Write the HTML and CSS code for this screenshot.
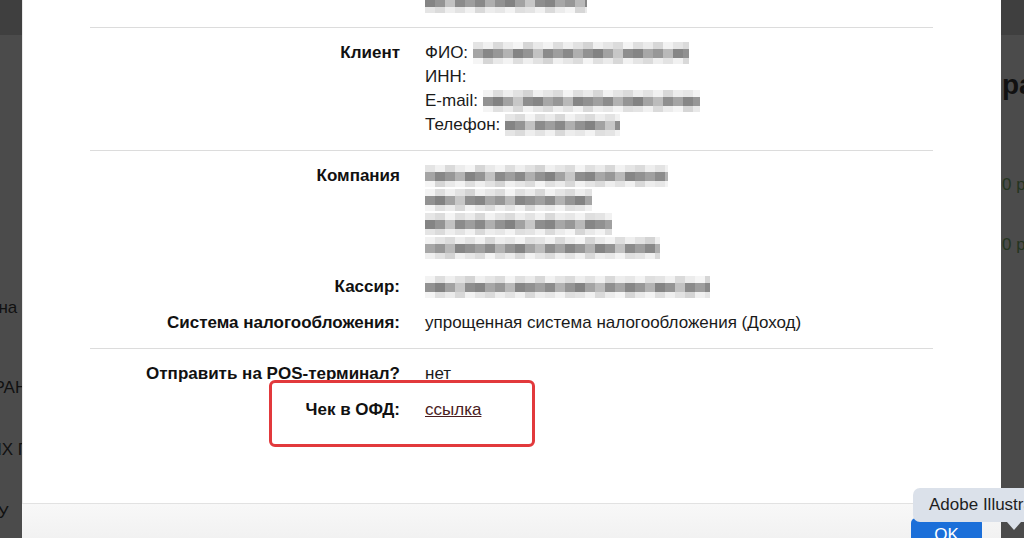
FILE: index.html
```html
<!DOCTYPE html>
<html lang="ru">

<head>
    <meta charset="UTF-8">
    <meta name="viewport" content="width=device-width, initial-scale=1.0">
    <title>Чек</title>
    <link rel="stylesheet" href="styles.css">
</head>

<body>

    <div class="backdrop">

        <!-- page under the overlay, left side -->
        <aside class="page-side page-left">
            <div class="page-bar"></div>
            <div class="page-item item-1">Смена</div>
            <div class="page-item item-2">ГАРАНТИИ</div>
            <div class="page-item item-3">ДРУГИХ ПРОДАЖ</div>
            <div class="page-item item-4">ЗАКАЗУ</div>
        </aside>

        <div class="modal">
            <div class="modal-body">

                <section class="group group-first">
                    <div class="row">
                        <div class="label"></div>
                        <div class="value"><span class="mosaic m-c" style="width:162px"></span></div>
                    </div>
                </section>

                <section class="group">
                    <div class="row">
                        <div class="label">Клиент</div>
                        <div class="value">
                            <div>ФИО: <span class="mosaic m-a" style="width:216px"></span></div>
                            <div>ИНН:</div>
                            <div>E-mail: <span class="mosaic m-b" style="width:217px"></span></div>
                            <div>Телефон: <span class="mosaic m-c" style="width:115px"></span></div>
                        </div>
                    </div>
                </section>

                <section class="group">
                    <div class="row row-company">
                        <div class="label">Компания</div>
                        <div class="value">
                            <div><span class="mosaic m-a" style="width:243px"></span></div>
                            <div><span class="mosaic m-b" style="width:167px"></span></div>
                            <div><span class="mosaic m-c" style="width:187px"></span></div>
                            <div><span class="mosaic m-d" style="width:235px"></span></div>
                        </div>
                    </div>
                    <div class="row">
                        <div class="label">Кассир:</div>
                        <div class="value"><span class="mosaic m-b" style="width:285px"></span></div>
                    </div>
                    <div class="row">
                        <div class="label">Система налогообложения:</div>
                        <div class="value">упрощенная система налогообложения (Доход)</div>
                    </div>
                </section>

                <section class="group">
                    <div class="row">
                        <div class="label">Отправить на POS-терминал?</div>
                        <div class="value">нет</div>
                    </div>
                    <div class="row row-marked">
                        <div class="label">Чек в ОФД:</div>
                        <div class="value"><a href="#" class="ofd-link">ссылка</a></div>
                        <div class="marker"></div>
                    </div>
                </section>

            </div>
            <div class="modal-footer">
                <button class="btn-ok">OK</button>
            </div>
        </div>

        <!-- page under the overlay, right side -->
        <aside class="page-side page-right">
            <div class="page-bar"></div>
            <div class="page-title">раздел</div>
            <div class="page-sum sum-1">0 руб.</div>
            <div class="page-sum sum-2">0 руб.</div>
        </aside>

    </div>

    <div class="dock-tip">Adobe Illustrator 2023</div>

</body>

</html>
```

FILE: styles.css
```css
html,
body {
    margin: 0;
    padding: 0;
    height: 100%;
    overflow: hidden;
}

body {
    font-family: 'Liberation Sans', Arial, sans-serif;
    font-size: 17px;
    background-color: #4b4b4b;
    color: #1a1a1a;
}

.backdrop {
    display: flex;
    height: 538px;
}

/* dimmed page behind the modal */
.page-side {
    background-color: #4b4b4b;
    overflow: hidden;
    white-space: nowrap;
    color: #111;
}

.page-left {
    width: 22px;
    flex: none;
}

.page-right {
    width: 23px;
    flex: none;
}

.page-bar {
    height: 35px;
    background-color: #3f3f3f;
}

.page-item {
    line-height: 20px;
}

.item-1 {
    margin: 263px 0 0 -35px;
}

.item-2 {
    margin: 60px 0 0 -26px;
}

.item-3 {
    margin: 42px 0 0 -53px;
}

.item-4 {
    margin: 43px 0 0 -55px;
}

.page-title {
    font-size: 28px;
    font-weight: bold;
    line-height: 32px;
    margin: 34px 0 0 1px;
}

.page-sum {
    line-height: 20px;
    color: #25341f;
    margin-left: 1px;
}

.sum-1 {
    margin-top: 74px;
}

.sum-2 {
    margin-top: 40px;
}

/* modal */
.modal {
    width: 979px;
    flex: none;
    background-color: #fff;
    overflow: hidden;
    box-shadow: inset 1px 0 0 #e8e8e8;
}

.modal-body {
    height: 503px;
    overflow: hidden;
    padding: 0 68px;
}

.group {
    border-top: 1px solid #dcdcdc;
    padding: 7px 0;
}

.group-first {
    border-top: none;
    padding-top: 0;
    margin-top: -16px;
}

.row {
    display: grid;
    grid-template-columns: 310px 1fr;
    column-gap: 25px;
    padding: 6px 0;
    line-height: 24px;
}

.row-company {
    padding-bottom: 9px;
}

.label {
    text-align: right;
    font-weight: bold;
    color: #111;
}

.value {
    white-space: nowrap;
}

.ofd-link {
    color: #4a1c1e;
    text-decoration: underline;
}

/* red annotation frame */
.row-marked {
    position: relative;
}

.marker {
    position: absolute;
    left: 179px;
    top: -12px;
    width: 266px;
    height: 67px;
    box-sizing: border-box;
    border: 3px solid #e2393c;
    border-radius: 6px;
}

/* pixelated personal data */
.mosaic {
    display: inline-block;
    height: 22px;
    vertical-align: top;
    margin-top: 1px;
    background-image:
        linear-gradient(90deg, #e4e4e4 0 10px, #f1f1f1 10px 20px, #dadada 20px 30px, #ececec 30px 40px, #f5f5f5 40px 50px, #d6d6d6 50px 60px, #e9e9e9 60px 70px, #f3f3f3 70px 80px, #dedede 80px 90px, #efefef 90px 100px, #e2e2e2 100px 110px, #d4d4d4 110px 120px, #f0f0f0 120px 130px, #e6e6e6 130px 140px, #dcdcdc 140px 150px, #f4f4f4 150px 160px, #e0e0e0 160px 170px, #ebebeb 170px 180px, #d8d8d8 180px 190px, #f2f2f2 190px 200px, #e5e5e5 200px 210px, #dbdbdb 210px 220px, #eeeeee 220px 230px, #e3e3e3 230px 240px, #f1f1f1 240px 250px, #d9d9d9 250px 260px, #ededed 260px 270px, #e7e7e7 270px 280px, #f3f3f3 280px 290px, #dfdfdf 290px 300px),
        linear-gradient(90deg, #a5a5a5 0 10px, #878787 10px 20px, #979797 20px 30px, #b3b3b3 30px 40px, #848484 40px 50px, #949494 50px 60px, #c2c2c2 60px 70px, #8b8b8b 70px 80px, #9e9e9e 80px 90px, #898989 90px 100px, #afafaf 100px 110px, #929292 110px 120px, #828282 120px 130px, #a2a2a2 130px 140px, #c7c7c7 140px 150px, #8e8e8e 150px 160px, #858585 160px 170px, #a7a7a7 170px 180px, #979797 180px 190px, #b9b9b9 190px 200px, #868686 200px 210px, #919191 210px 220px, #a0a0a0 220px 230px, #8c8c8c 230px 240px, #b2b2b2 240px 250px, #959595 250px 260px, #838383 260px 270px, #a4a4a4 270px 280px, #bcbcbc 280px 290px, #8f8f8f 290px 300px),
        linear-gradient(90deg, #e4e4e4 0 10px, #f1f1f1 10px 20px, #dadada 20px 30px, #ececec 30px 40px, #f5f5f5 40px 50px, #d6d6d6 50px 60px, #e9e9e9 60px 70px, #f3f3f3 70px 80px, #dedede 80px 90px, #efefef 90px 100px, #e2e2e2 100px 110px, #d4d4d4 110px 120px, #f0f0f0 120px 130px, #e6e6e6 130px 140px, #dcdcdc 140px 150px, #f4f4f4 150px 160px, #e0e0e0 160px 170px, #ebebeb 170px 180px, #d8d8d8 180px 190px, #f2f2f2 190px 200px, #e5e5e5 200px 210px, #dbdbdb 210px 220px, #eeeeee 220px 230px, #e3e3e3 230px 240px, #f1f1f1 240px 250px, #d9d9d9 250px 260px, #ededed 260px 270px, #e7e7e7 270px 280px, #f3f3f3 280px 290px, #dfdfdf 290px 300px);
    background-size: 300px 7px, 300px 9px, 300px 6px;
    background-repeat: repeat-x;
    background-position: 0 0, 0 7px, -40px 16px;
}

.m-b {
    background-position: -70px 0, -110px 7px, -150px 16px;
}

.m-c {
    background-position: -130px 0, -40px 7px, -200px 16px;
}

.m-d {
    background-position: -190px 0, -170px 7px, -90px 16px;
}

/* footer */
.modal-footer {
    border-top: 1px solid #e2e2e2;
    background: linear-gradient(#f8f8f8, #ececec);
    padding: 14px 19px;
    display: flex;
    justify-content: flex-end;
}

.btn-ok {
    width: 71px;
    height: 34px;
    border: none;
    border-radius: 5px;
    background-color: #1b6fd9;
    color: #fff;
    font-family: 'Liberation Sans', Arial, sans-serif;
    font-size: 17px;
}

/* system dock tooltip over the page */
.dock-tip {
    position: fixed;
    left: 913px;
    top: 488px;
    height: 34px;
    line-height: 34px;
    padding: 0 16px;
    border-radius: 7px;
    background-color: #dbe1ea;
    color: #1e1e1e;
    font-size: 17px;
    white-space: nowrap;
}

.dock-tip::after {
    content: "";
    position: absolute;
    left: 94px;
    bottom: -8px;
    border-left: 7px solid transparent;
    border-right: 7px solid transparent;
    border-top: 8px solid #dbe1ea;
}
```
